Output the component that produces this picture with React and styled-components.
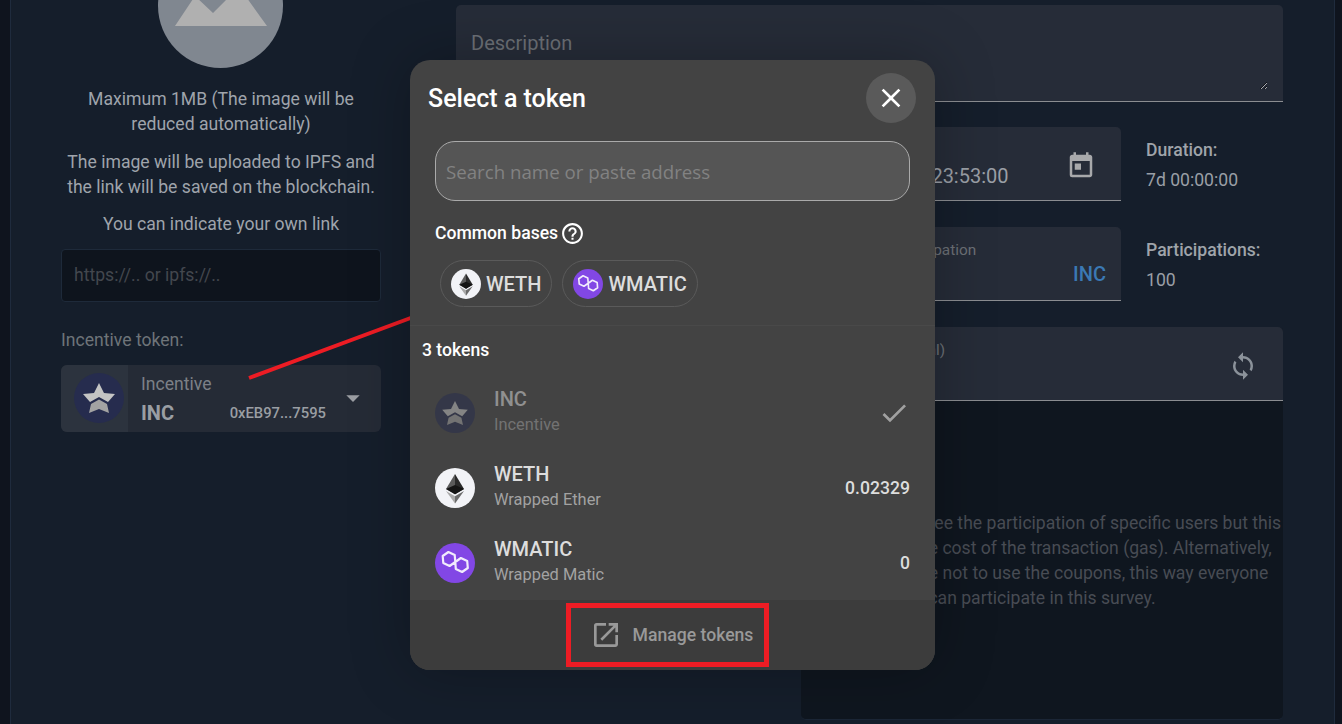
import React from 'react';
import styled, { createGlobalStyle } from 'styled-components';
import { MdClose, MdCheck, MdHelpOutline, MdOpenInNew, MdToday, MdSync, MdArrowDropDown } from 'react-icons/md';

const GlobalStyle = createGlobalStyle`
    html, body {
        margin: 0;
        padding: 0;
        background: #0f141e;
    }
    body {
        font-family: Roboto, "Liberation Sans", sans-serif;
        font-size: 17.6px;
    }
`;

const StarIcon = ({ size }) => (
    <svg width={size} height={size} viewBox="0 0 50 50">
        <circle cx="25" cy="25" r="25" fill="#262c4e" />
        <path d="M25 10l5 10 11 1-7 8-9-5-9 5-7-8 11-1z" fill="#c4c4c4" />
        <path d="M25 26.500l8 4.500 2 9-10-4-10 4 2-9z" fill="#a3a3a3" />
    </svg>
);

const EthIcon = ({ size }) => (
    <svg width={size} height={size} viewBox="0 0 40 40">
        <circle cx="20" cy="20" r="20" fill="#f2f3f7" />
        <path d="M20 6l-9 15 9 5.300z" fill="#5b5b5b" />
        <path d="M20 6l9 15-9 5.300z" fill="#2a2a2a" />
        <path d="M11 21l9-4 9 4-9 5.300z" fill="#141414" />
        <path d="M11 23l9 5.300v7.200z" fill="#a8a8a8" />
        <path d="M20 28.300l9-5.300-9 12.500z" fill="#6a6a6a" />
    </svg>
);

const MaticIcon = ({ size }) => (
    <svg width={size} height={size} viewBox="0 0 40 40">
        <circle cx="20" cy="20" r="20" fill="#8247e5" />
        <path
            d="M20.300 19L14.600 23 8.300 20 7.700 13 13.400 9 19.700 12zM20.300 19L25.900 15 32.200 18 32.800 25 27.100 29 20.800 26z"
            fill="none"
            stroke="#f1ebfc"
            strokeWidth="2.200"
            strokeLinejoin="round"
        />
    </svg>
);

const tokens = [
    { symbol: 'INC', name: 'Incentive', Icon: StarIcon, selected: true },
    { symbol: 'WETH', name: 'Wrapped Ether', Icon: EthIcon, amount: '0.02329' },
    { symbol: 'WMATIC', name: 'Wrapped Matic', Icon: MaticIcon, amount: '0' },
];

const App = () => {
    return (
        <Page>
            <GlobalStyle />
            <Card>
                <LeftColumn>
                    <Avatar>
                        <svg width="125" height="125" viewBox="0 0 125 125">
                            <path d="M17 83L37 53 55 70 81 44 109 83z" fill="#b0b0b0" />
                        </svg>
                    </Avatar>
                    <Hint>Maximum 1MB (The image will be reduced automatically)</Hint>
                    <Hint>The image will be uploaded to IPFS and the link will be saved on the blockchain.</Hint>
                    <Hint>You can indicate your own link</Hint>
                    <LinkInput placeholder="https://.. or ipfs://.." />
                    <FieldTitle>Incentive token:</FieldTitle>
                    <TokenSelect>
                        <TokenSelectIcon>
                            <StarIcon size={50} />
                        </TokenSelectIcon>
                        <TokenSelectBody>
                            <TokenSelectName>Incentive</TokenSelectName>
                            <TokenSelectRow>
                                <TokenSelectSymbol>INC</TokenSelectSymbol>
                                <TokenSelectAddress>0xEB97...7595</TokenSelectAddress>
                            </TokenSelectRow>
                        </TokenSelectBody>
                        <MdArrowDropDown size={32} color="#9b9ea3" />
                    </TokenSelect>
                </LeftColumn>
                <RightColumn>
                    <DescriptionBox>
                        <Description placeholder="Description" />
                    </DescriptionBox>
                    <FormGrid>
                        <Field $column={2}>
                            <DateValue>24/05/2022 23:53:00</DateValue>
                            <DateIcon>
                                <MdToday size={30} />
                            </DateIcon>
                        </Field>
                        <Stat>
                            <StatTitle>Duration:</StatTitle>
                            <StatValue>7d 00:00:00</StatValue>
                        </Stat>
                        <Field $column={2}>
                            <FieldLabel $shift={-7}>Reward per participation</FieldLabel>
                            <Unit>INC</Unit>
                        </Field>
                        <Stat>
                            <StatTitle>Participations:</StatTitle>
                            <StatValue>100</StatValue>
                        </Stat>
                        <CouponPanel>
                            <CouponHeader>
                                <FieldLabel $shift={-2}>Coupons (optional)</FieldLabel>
                                <SyncIcon>
                                    <MdSync size={30} />
                                </SyncIcon>
                            </CouponHeader>
                            <CouponBody>
                                <CouponText>
                                    You may guarantee the participation of specific users but this<br />
                                    will increase the cost of the transaction (gas). Alternatively,<br />
                                    you can choose not to use the coupons, this way everyone<br />
                                    can participate in this survey.
                                </CouponText>
                            </CouponBody>
                        </CouponPanel>
                    </FormGrid>
                </RightColumn>
            </Card>

            <Arrow width="170" height="70" viewBox="0 0 170 70">
                <line x1="1" y1="64" x2="168" y2="2" stroke="#ed1c24" strokeWidth="4" />
            </Arrow>

            <Modal>
                <ModalHeader>
                    <ModalTitle>Select a token</ModalTitle>
                    <CloseButton>
                        <MdClose size={32} color="#fff" />
                    </CloseButton>
                </ModalHeader>
                <SearchInput placeholder="Search name or paste address" />
                <BasesTitle>
                    Common bases
                    <MdHelpOutline size={25} color="#fff" />
                </BasesTitle>
                <Bases>
                    <BasePill>
                        <EthIcon size={30} />
                        WETH
                    </BasePill>
                    <BasePill>
                        <MaticIcon size={30} />
                        WMATIC
                    </BasePill>
                </Bases>
                <Divider />
                <TokenCount>3 tokens</TokenCount>
                {tokens.map(({ symbol, name, Icon, amount, selected }) => (
                    <TokenRow key={symbol} $selected={selected}>
                        <Icon size={40} />
                        <TokenInfo>
                            <TokenSymbol>{symbol}</TokenSymbol>
                            <TokenName>{name}</TokenName>
                        </TokenInfo>
                        {selected ? <MdCheck size={32} color="#fff" /> : <TokenAmount>{amount}</TokenAmount>}
                    </TokenRow>
                ))}
                <ModalFooter>
                    <ManageButton>
                        <MdOpenInNew size={32} />
                        Manage tokens
                    </ManageButton>
                </ModalFooter>
            </Modal>
        </Page>
    );
};

const Page = styled.div`
    position: relative;
    height: 724px;
    overflow: hidden;
    padding-left: 10px;
    background: #0f141e;
`;

const Card = styled.div`
    display: flex;
    gap: 75px;
    box-sizing: border-box;
    width: 1325px;
    height: 724px;
    padding: 0 50px;
    background: #151e2b;
    border-left: 1px solid #1f2b3d;
    border-right: 1px solid #1f2b3d;
`;

const LeftColumn = styled.div`
    display: flex;
    flex-direction: column;
    width: 320px;
    flex-shrink: 0;
`;

const Avatar = styled.div`
    align-self: center;
    width: 125px;
    height: 125px;
    margin: -57px 1px 19px 0;
    border-radius: 50%;
    background: #808790;
    overflow: hidden;
    flex-shrink: 0;
`;

const Hint = styled.p`
    margin: 0 0 12.5px;
    font-size: 17.6px;
    line-height: 25px;
    text-align: center;
    color: #9fa4ab;
`;

const LinkInput = styled.input`
    box-sizing: border-box;
    width: 320px;
    height: 53px;
    margin-top: -1px;
    padding: 0 12px;
    background: #0e141d;
    border: 1px solid #1e2a3a;
    border-radius: 4px;
    outline: none;
    font-family: inherit;
    font-size: 17.6px;
    &::placeholder {
        color: #43474e;
        opacity: 1;
    }
`;

const FieldTitle = styled.div`
    margin-top: 26px;
    line-height: 24px;
    color: #6e7479;
`;

const TokenSelect = styled.div`
    display: flex;
    align-items: center;
    height: 67px;
    margin-top: 13px;
    padding-right: 12px;
    background: #252b36;
    border-radius: 6px;
    overflow: hidden;
`;

const TokenSelectIcon = styled.div`
    display: flex;
    align-items: center;
    box-sizing: border-box;
    width: 67px;
    height: 100%;
    padding-left: 13px;
    background: #2c333e;
`;

const TokenSelectBody = styled.div`
    flex: 1;
    padding: 0 11px 0 13px;
`;

const TokenSelectName = styled.div`
    font-size: 17.6px;
    line-height: 22px;
    color: #7c8087;
`;

const TokenSelectRow = styled.div`
    display: flex;
    align-items: center;
    justify-content: space-between;
    margin-top: 7px;
`;

const TokenSelectSymbol = styled.div`
    font-size: 20px;
    font-weight: 700;
    line-height: 22px;
    color: #9a9ea3;
`;

const TokenSelectAddress = styled.div`
    font-size: 14.8px;
    font-weight: 500;
    color: #9a9ea3;
`;

const RightColumn = styled.div`
    display: flex;
    flex-direction: column;
    gap: 25px;
    width: 827px;
    flex-shrink: 0;
    padding-top: 5px;
`;

const DescriptionBox = styled.div`
    box-sizing: border-box;
    height: 97px;
    padding: 26px 15px 11px;
    background: #262c38;
    border-bottom: 1px solid #8b8d91;
    border-radius: 5px 5px 0 0;
`;

const Description = styled.textarea`
    display: block;
    box-sizing: border-box;
    width: 100%;
    height: 59px;
    padding: 0;
    background: transparent;
    border: none;
    outline: none;
    resize: vertical;
    font-family: inherit;
    font-size: 20px;
    &::placeholder {
        color: #6c7076;
        opacity: 1;
    }
`;

const FormGrid = styled.div`
    display: grid;
    grid-template-columns: 320px 320px 137px;
    column-gap: 25px;
    row-gap: 26px;
`;

const Field = styled.div`
    grid-column: ${props => props.$column};
    display: flex;
    align-items: center;
    justify-content: space-between;
    box-sizing: border-box;
    height: 74px;
    padding: 0 25px 0 15px;
    background: #262c38;
    border-bottom: 1px solid #8b8d91;
    border-radius: 5px 5px 0 0;
`;

const DateValue = styled.div`
    margin-top: 25px;
    padding-left: 4px;
    font-size: 20px;
    color: #9a9fa6;
`;

const DateIcon = styled.div`
    display: flex;
    margin-top: 5px;
    color: #a8a9ab;
`;

const SyncIcon = styled.div`
    display: flex;
    margin-top: 5px;
    color: #8b929a;
`;

const FieldLabel = styled.div`
    align-self: flex-start;
    margin-top: 14px;
    margin-left: ${props => props.$shift}px;
    font-size: 15.4px;
    color: #6c7076;
`;

const Unit = styled.div`
    align-self: flex-end;
    margin: 0 -10px 14px 0;
    font-size: 20px;
    font-weight: 500;
    color: #3b79b4;
`;

const Stat = styled.div`
    display: flex;
    flex-direction: column;
    gap: 6px;
    padding-top: 11px;
`;

const StatTitle = styled.div`
    font-size: 17.6px;
    font-weight: 500;
    line-height: 24px;
    color: #9fa4aa;
`;

const StatValue = styled.div`
    font-size: 17.6px;
    line-height: 24px;
    color: #9a9fa6;
`;

const CouponPanel = styled.div`
    grid-column: 2 / span 2;
    display: flex;
    flex-direction: column;
    height: 392px;
    border-radius: 5px;
    background: #0f161f;
    border-bottom: 1px solid #1b2636;
    overflow: hidden;
`;

const CouponHeader = styled.div`
    display: flex;
    align-items: center;
    justify-content: space-between;
    box-sizing: border-box;
    height: 74px;
    padding: 0 25px 0 15px;
    background: #262c38;
    border-bottom: 1px solid #8b8d91;
`;

const CouponBody = styled.div`
    flex: 1;
    display: flex;
    align-items: center;
    justify-content: center;
    padding-top: 2px;
`;

const CouponText = styled.p`
    margin: 0;
    font-size: 17.6px;
    line-height: 25px;
    text-align: center;
    white-space: nowrap;
    color: #484c54;
`;

const Arrow = styled.svg`
    position: absolute;
    left: 248px;
    top: 314px;
`;

const Modal = styled.div`
    position: absolute;
    left: 410px;
    top: 60px;
    display: flex;
    flex-direction: column;
    width: 525px;
    height: 610px;
    background: #434343;
    border-radius: 20px;
    box-shadow: 0 0 60px rgba(0, 0, 0, 0.25);
    overflow: hidden;
`;

const ModalHeader = styled.div`
    display: flex;
    align-items: center;
    justify-content: space-between;
    padding: 13px 19px 0 18px;
`;

const ModalTitle = styled.div`
    margin-top: 1px;
    font-size: 25px;
    font-weight: 500;
    color: #fff;
`;

const CloseButton = styled.div`
    display: flex;
    align-items: center;
    justify-content: center;
    width: 50px;
    height: 50px;
    border-radius: 50%;
    background: #5a5a5a;
`;

const SearchInput = styled.input`
    box-sizing: border-box;
    width: 475px;
    height: 60px;
    margin: 18px 25px 0;
    padding: 0 10px;
    background: #555;
    border: 1px solid #aaa;
    border-radius: 20px;
    outline: none;
    font-family: "Open Sans", sans-serif;
    font-size: 18.7px;
    &::placeholder {
        color: #828282;
        opacity: 1;
    }
`;

const BasesTitle = styled.div`
    display: flex;
    align-items: center;
    gap: 2px;
    height: 24px;
    margin: 20px 25px 0;
    font-size: 17.6px;
    font-weight: 500;
    color: #fff;
`;

const Bases = styled.div`
    display: flex;
    gap: 10px;
    margin: 15px 30px 0;
`;

const BasePill = styled.div`
    display: flex;
    align-items: center;
    gap: 5px;
    box-sizing: border-box;
    height: 47px;
    padding: 0 10px;
    border: 1px solid #5a5a5a;
    border-radius: 24px;
    font-size: 20px;
    font-weight: 500;
    color: #ddd;
`;

const Divider = styled.div`
    height: 1px;
    margin-top: 18px;
    background: #494949;
`;

const TokenCount = styled.div`
    margin: 12px 12px 13px;
    line-height: 24px;
    font-size: 17.6px;
    font-weight: 500;
    color: #fff;
`;

const TokenRow = styled.div`
    display: flex;
    align-items: center;
    gap: 19px;
    flex-shrink: 0;
    height: 75px;
    padding: 0 25px;
    opacity: ${props => (props.$selected ? 0.5 : 1)};
`;

const TokenInfo = styled.div`
    flex: 1;
    margin-top: -2px;
`;

const TokenSymbol = styled.div`
    font-size: 20px;
    font-weight: 500;
    line-height: 25px;
    color: #ddd;
`;

const TokenName = styled.div`
    font-size: 16.4px;
    line-height: 25px;
    color: #a2a2a2;
`;

const TokenAmount = styled.div`
    font-size: 17.6px;
    font-weight: 500;
    color: #ddd;
`;

const ModalFooter = styled.div`
    display: flex;
    align-items: center;
    justify-content: center;
    height: 70px;
    padding-right: 10px;
    background: #3c3c3c;
`;

const ManageButton = styled.div`
    display: flex;
    align-items: center;
    justify-content: center;
    gap: 11px;
    box-sizing: border-box;
    width: 203px;
    height: 64px;
    padding-left: 8px;
    border: 5px solid #ed1c24;
    font-size: 17.6px;
    font-weight: 500;
    color: #999;
`;

export default App;
